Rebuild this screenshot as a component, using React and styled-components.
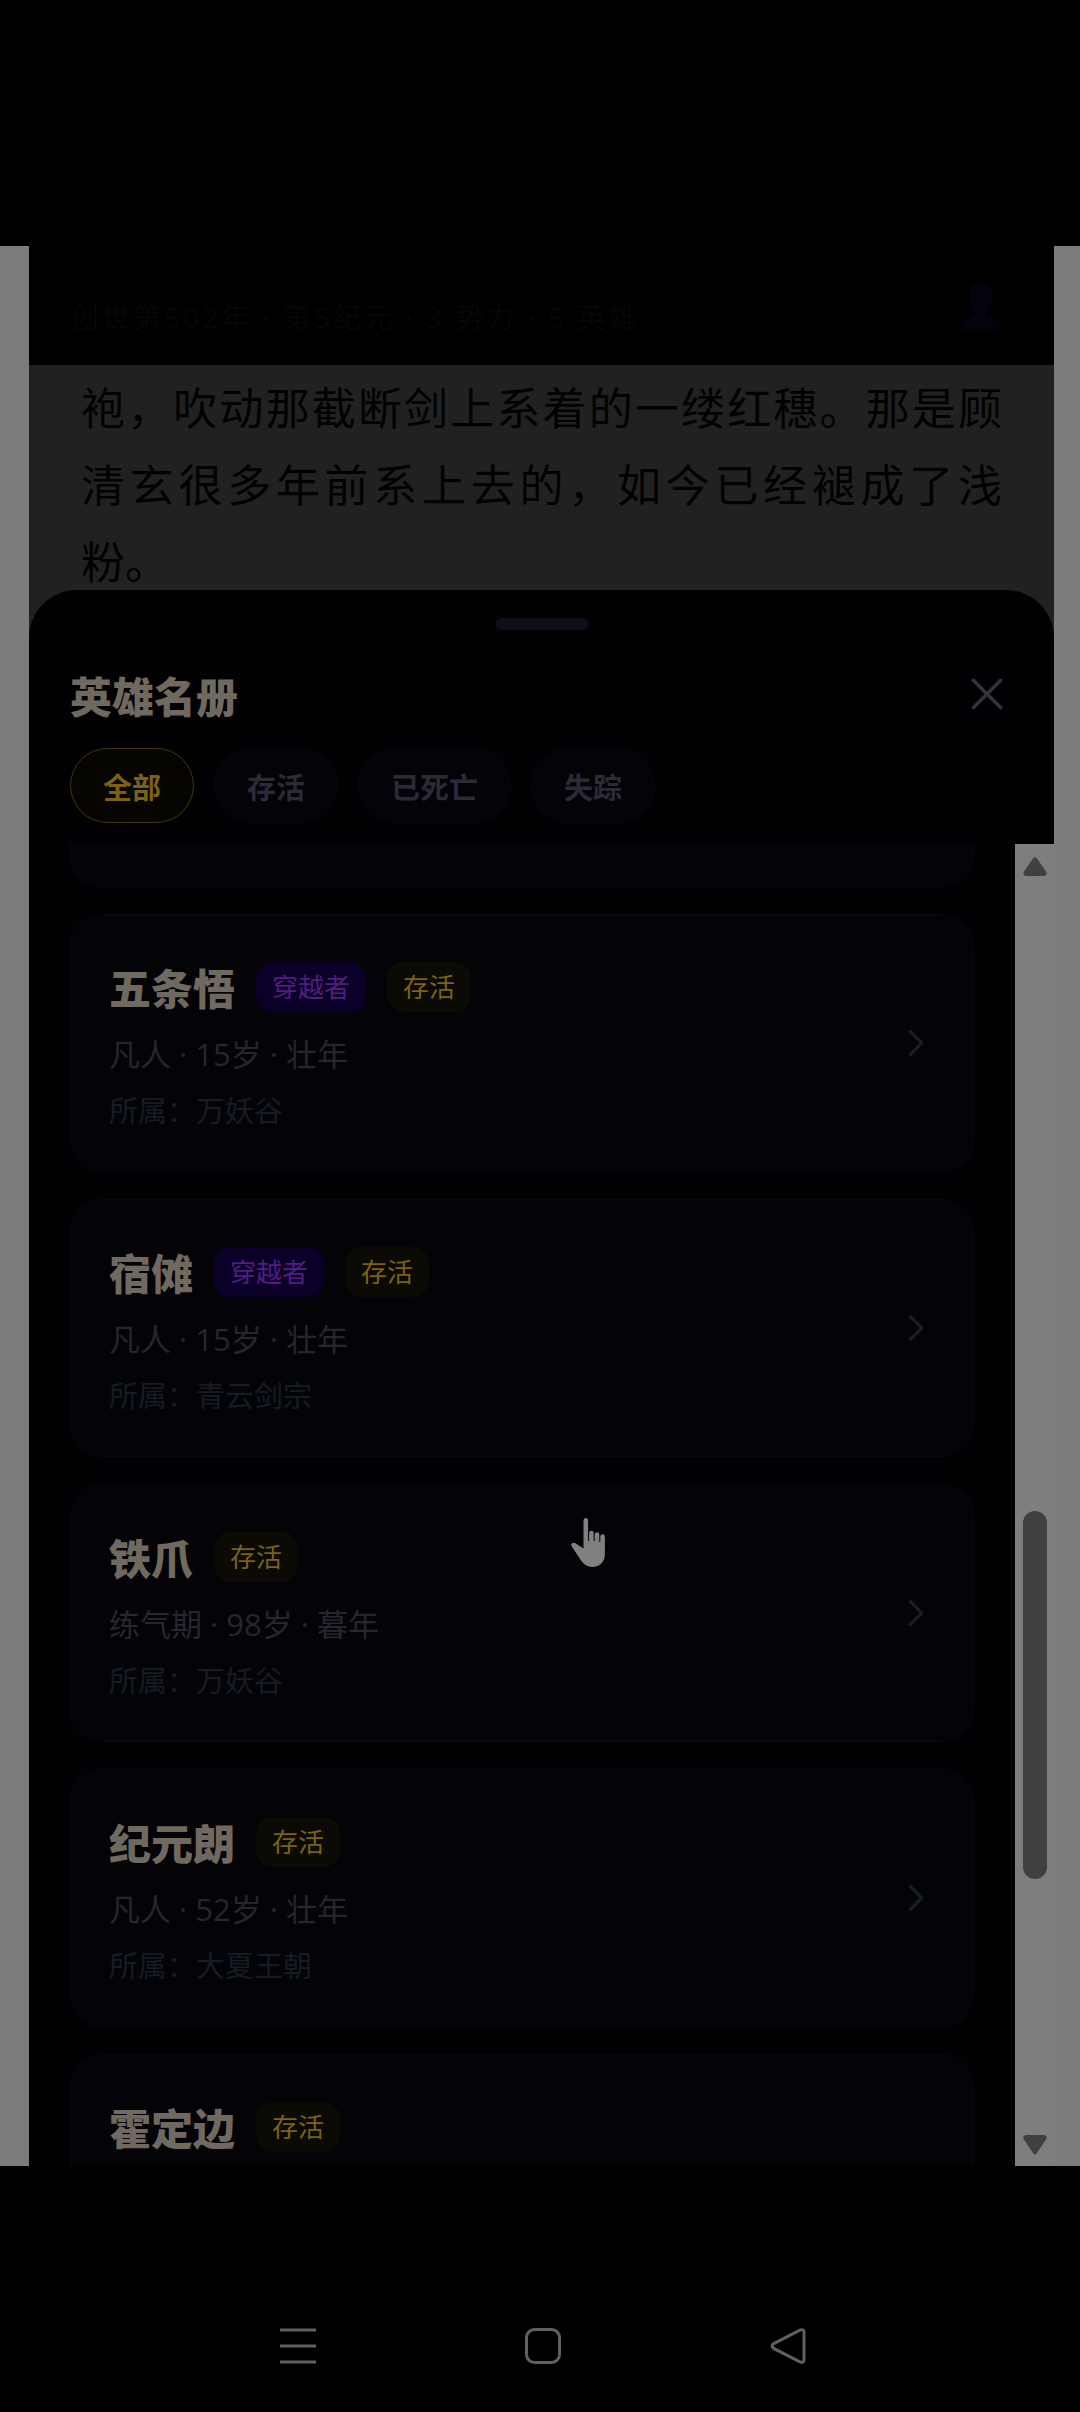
import React, { useState } from 'react';
import styled, { createGlobalStyle } from 'styled-components';
import { ChevronRight, X } from 'lucide-react';


const filters = ['全部', '存活', '已死亡', '失踪'];

const heroes = [
  { name: '五条悟', traveler: true, meta: '凡人 · 15岁 · 壮年', faction: '万妖谷' },
  { name: '宿傩', traveler: true, meta: '凡人 · 15岁 · 壮年', faction: '青云剑宗' },
  { name: '铁爪', meta: '练气期 · 98岁 · 暮年', faction: '万妖谷' },
  { name: '纪元朗', meta: '凡人 · 52岁 · 壮年', faction: '大夏王朝' },
  { name: '霍定边' },
];

export default function App () {
  const [filter, setFilter] = useState('全部');

  return (
    <Screen>
      <GlobalStyle/>
      <Letterbox/>
      <Page>
        <Phone>
          <Header>
            <WorldInfo>创世第502年 · 第5纪元 · 3 势力 · 5 英雄</WorldInfo>
            <ProfileButton aria-label="profile">
              <ProfileIcon/>
            </ProfileButton>
          </Header>
          <Story>袍，吹动那截断剑上系着的一缕红穗。那是顾清玄很多年前系上去的，如今已经褪成了浅粉。</Story>
          <Sheet>
            <Handle/>
            <SheetHeader>
              <Title>英雄名册</Title>
              <CloseButton aria-label="close">
                <X size={54} strokeWidth={1.6}/>
              </CloseButton>
            </SheetHeader>
            <Filters>
              {filters.map(f => (
                <Chip key={f} $active={f === filter} onClick={() => setFilter(f)}>{f}</Chip>
              ))}
            </Filters>
            <SheetBody>
              <List>
                <CardTail/>
                {heroes.map(h => <HeroCard key={h.name} {...h}/>)}
              </List>
              <Scrollbar/>
            </SheetBody>
            <Pointer/>
          </Sheet>
        </Phone>
      </Page>
      <NavBar>
        <NavButton aria-label="menu">
          <svg width="36" height="36" viewBox="0 0 36 36">
            <path d="M0 2h36M0 18h36M0 34h36"/>
          </svg>
        </NavButton>
        <NavButton aria-label="home">
          <svg width="36" height="36" viewBox="0 0 36 36">
            <rect x="1.5" y="1.5" width="33" height="33" rx="8"/>
          </svg>
        </NavButton>
        <NavButton aria-label="back">
          <svg width="36" height="36" viewBox="0 0 36 36">
            <path d="M3.2 15.8 30.4 1.9q3.6-1 3.6 2.6v27q0 3.6-3.6 2.6L3.2 20.2q-2-2.2 0-4.4z"/>
          </svg>
        </NavButton>
      </NavBar>
    </Screen>
  );
}

function HeroCard ({ name, traveler, meta, faction }) {
  return (
    <Card>
      <CardBody>
        <NameRow>
          <Name>{name}</Name>
          {traveler && <Badge $traveler>穿越者</Badge>}
          <Badge>存活</Badge>
        </NameRow>
        {meta && <Meta>{meta}</Meta>}
        {faction && <Faction>所属：{faction}</Faction>}
      </CardBody>
      <ChevronRight size={46} strokeWidth={1.7}/>
    </Card>
  );
}

function Scrollbar () {
  return (
    <ScrollTrack>
      <svg width="24" height="45" viewBox="0 0 24 45">
        <path d="M10 14.5q2-3 4 0l9 13q2 4-2 4.5H3q-4-.5-2-4.5z"/>
      </svg>
      <ScrollSpace $grow={622}/>
      <ScrollThumb/>
      <ScrollSpace $grow={242}/>
      <svg width="24" height="45" viewBox="0 0 24 45">
        <path d="M10 32q2 3 4 0l9-13.5q2-4-2-4.5H3q-4 .5-2 4.5z"/>
      </svg>
    </ScrollTrack>
  );
}

function ProfileIcon () {
  return (
    <svg width="40" height="50" viewBox="0 0 40 50">
      <path d="M20 1c7 0 11 4 11 11 0 9-2 15-4 17v4c6 2 12 5 13 15H0c1-10 7-13 13-15v-4c-2-2-4-8-4-17C9 5 13 1 20 1z"/>
    </svg>
  );
}

function Pointer () {
  return (
    <PointerIcon width="38" height="50" viewBox="0 0 38 50">
      <path d="M12.5 3q0-3 2.3-3t2.3 3v20h1V15q0-2.300 2.300-2.300t2.300 2.300v8h1v-6.500q0-2.300 2.300-2.300t2.300 2.300V24h1v-5.500q0-2.300 2.300-2.300t2.300 2.300V36c0 8-5.500 13-12.500 13-6 0-10-4-13-9L.8 28.500q-1.500-2.500.7-3.500 1.500-.7 4 .9l7 4.600z"/>
    </PointerIcon>
  );
}

const GlobalStyle = createGlobalStyle`
  * {
    box-sizing: border-box;
  }
  body {
    margin: 0;
    background: #000;
    font-family: "Open Sans", "Noto Sans CJK SC", sans-serif;
  }
  button {
    margin: 0;
    padding: 0;
    border: none;
    background: none;
    font-family: inherit;
    cursor: pointer;
  }
  svg {
    display: block;
    flex: none;
  }
`;

const Screen = styled.div`
  height: 100vh;
  display: flex;
  flex-direction: column;
  background: #000;
`;

const Letterbox = styled.div`
  flex: 0 0 246px;
`;

const Page = styled.main`
  flex: 1;
  min-height: 0;
  display: flex;
  padding: 0 26px 0 29px;
  background: #7c7c7c;
`;

const Phone = styled.div`
  position: relative;
  flex: 1;
  min-width: 0;
  overflow: hidden;
  background: #212121;
`;

const Header = styled.header`
  height: 119px;
  padding: 22px 53px 0 42px;
  display: flex;
  align-items: center;
  justify-content: space-between;
  background: #000;
`;

const WorldInfo = styled.div`
  font-size: 28px;
  line-height: 40px;
  letter-spacing: 3px;
  color: #060606;
`;

const ProfileButton = styled.button`
  padding-bottom: 20px;
  fill: #04020c;
`;

const Story = styled.p`
  margin: 0;
  padding: 3px 52px 0;
  font-family: "Noto Sans CJK SC", sans-serif;
  font-size: 44px;
  line-height: 77px;
  text-align: justify;
  color: #020202;
`;


/** SHEET **/

const Sheet = styled.section`
  position: absolute;
  top: 344px;
  right: 0;
  bottom: 0;
  left: 0;
  display: flex;
  flex-direction: column;
  border-radius: 48px 48px 0 0;
  background: #010103;
`;

const Handle = styled.div`
  width: 94px;
  height: 12px;
  margin: 28px auto 0;
  border-radius: 6px;
  background: #0f0d18;
`;

const SheetHeader = styled.div`
  padding: 34px 40px 0 41px;
  display: flex;
  align-items: center;
  justify-content: space-between;
`;

const Title = styled.h2`
  margin: 0;
  font-family: "Noto Sans CJK SC", sans-serif;
  font-size: 42px;
  line-height: 62px;
  font-weight: 900;
  color: #70695f;
`;

const CloseButton = styled.button`
  padding-bottom: 2px;
  color: #35323f;
`;

const Filters = styled.div`
  padding: 22px 41px 21px;
  display: flex;
  gap: 20px;
`;

const Chip = styled.button`
  height: 75px;
  padding: 0 32px;
  border: 1px solid ${props => props.$active ? '#43370c' : '#07070c'};
  border-radius: 38px;
  font-family: "Noto Sans CJK SC", sans-serif;
  font-size: 29px;
  font-weight: 700;
  color: ${props => props.$active ? '#7c6210' : '#2c2a36'};
  background: ${props => props.$active ? '#070502' : '#030308'};
`;

const SheetBody = styled.div`
  flex: 1;
  min-height: 0;
  display: flex;
`;

const List = styled.div`
  flex: 1;
  padding: 0 41px;
  display: flex;
  flex-direction: column;
  gap: 27px;
  overflow: hidden;
`;

const CardTail = styled.div`
  flex: 0 0 43px;
  border: 1px solid #07070c;
  border-top: none;
  border-radius: 0 0 32px 32px;
  background: #030308;
`;

const Card = styled.article`
  flex: none;
  min-height: 258px;
  padding: 38px 34px 39px 38px;
  display: flex;
  align-items: center;
  justify-content: space-between;
  border: 1px solid #07070c;
  border-radius: 32px;
  color: #161d25;
  background: #030308;
`;

const CardBody = styled.div`
  align-self: flex-start;
`;

const NameRow = styled.div`
  display: flex;
  align-items: center;
  gap: 21px;
`;

const Name = styled.h3`
  margin: 0;
  font-family: "Noto Sans CJK SC", sans-serif;
  font-size: 42px;
  line-height: 68px;
  font-weight: 900;
  color: #70695f;
`;

const Badge = styled.span`
  padding: 0 16px;
  border-radius: 16px;
  font-size: 26px;
  line-height: 50px;
  color: ${props => props.$traveler ? '#521c80' : '#7c6210'};
  background: ${props => props.$traveler ? '#0b0128' : '#0c0a05'};
`;

const Meta = styled.div`
  margin-top: 11px;
  font-size: 31px;
  line-height: 44px;
  color: #27252e;
`;

const Faction = styled.div`
  margin-top: 15px;
  font-size: 29px;
  line-height: 40px;
  color: #151c25;
`;

const ScrollTrack = styled.div`
  width: 39px;
  display: flex;
  flex-direction: column;
  align-items: center;
  fill: #404040;
  background: #7e7e7e;
`;

const ScrollSpace = styled.div`
  flex: ${props => props.$grow};
`;

const ScrollThumb = styled.div`
  flex: 368;
  width: 24px;
  border-radius: 12px;
  background: #404040;
`;

const PointerIcon = styled.svg`
  position: absolute;
  top: 928px;
  left: 542px;
  fill: #808080;
`;


/** SYSTEM NAVIGATION **/

const NavBar = styled.nav`
  flex: 0 0 246px;
  padding: 162px 0 0 6px;
  display: flex;
  align-items: flex-start;
  justify-content: center;
  gap: 209px;
`;

const NavButton = styled.button`
  fill: none;
  stroke: #606060;
  stroke-width: 3;
`;
